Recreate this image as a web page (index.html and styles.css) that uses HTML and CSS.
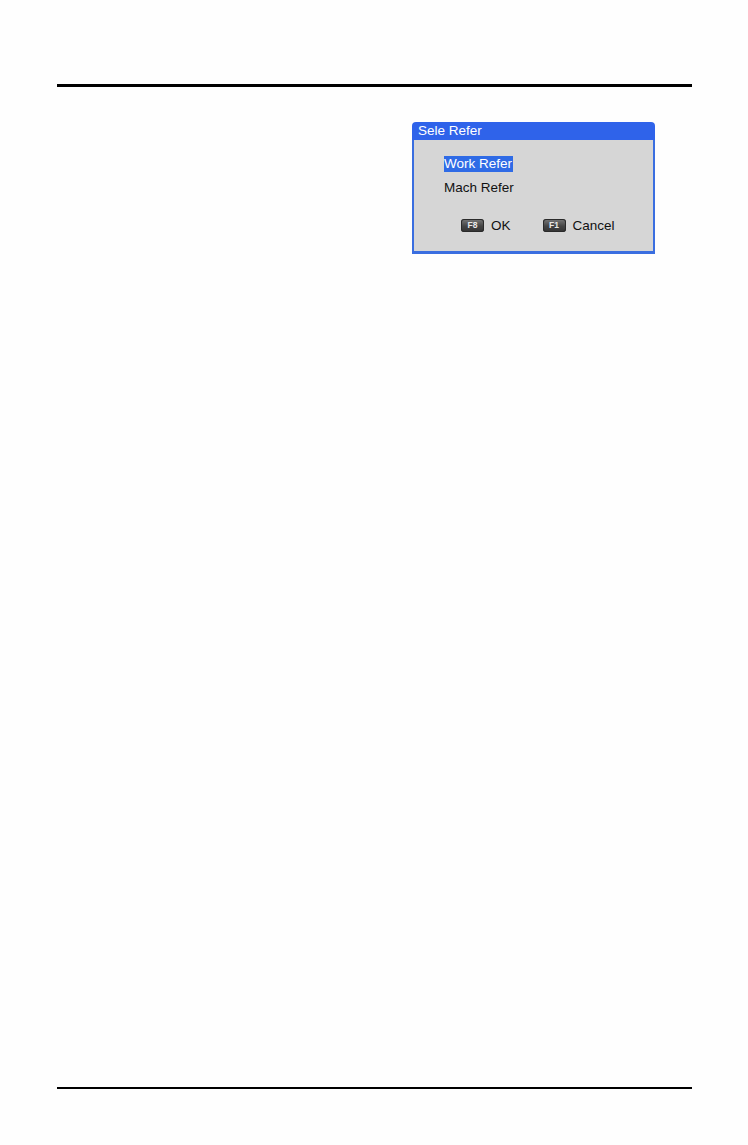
FILE: index.html
```html
<!DOCTYPE html>
<html>
<head>
<meta charset="utf-8">
<link rel="stylesheet" href="styles.css">
</head>
<body>
<div class="page">
  <div class="header-rule"></div>
  <div class="content">
    <div class="dialog">
      <div class="dialog-title">Sele Refer</div>
      <div class="dialog-body">
        <div class="options">
          <div class="option"><span class="selected">Work Refer</span></div>
          <div class="option">Mach Refer</div>
        </div>
        <div class="actions">
          <div class="action"><span class="key">F8</span><span class="action-label">OK</span></div>
          <div class="action"><span class="key">F1</span><span class="action-label">Cancel</span></div>
        </div>
      </div>
    </div>
  </div>
  <div class="footer-rule"></div>
</div>
</body>
</html>
```

FILE: styles.css
```css
html, body {
  margin: 0;
  padding: 0;
  background: #fefefe;
}

.page {
  width: 635px;
  height: 1145px;
  margin-left: 57px;
  display: flex;
  flex-direction: column;
  font-family: "Liberation Sans", Arial, sans-serif;
}

.header-rule {
  height: 84px;
  border-bottom: 3px solid #000;
  flex: none;
}

.content {
  flex: 1;
  padding-top: 35px;
  padding-left: 355px;
}

.footer-rule {
  flex: none;
  height: 56px;
  border-top: 2px solid #000;
  margin-top: auto;
}

.dialog {
  width: 243px;
}

.dialog-title {
  height: 18px;
  background: #2f63ea;
  border-radius: 4px 4px 0 0;
  color: #fff;
  font-size: 13.5px;
  line-height: 18px;
  padding-left: 6px;
}

.dialog-body {
  height: 111px;
  background: #d6d6d6;
  border-left: 2px solid #3a6ee0;
  border-right: 2px solid #3a6ee0;
  border-bottom: 3px solid #3a6ee0;
  padding-left: 30px;
  box-sizing: content-box;
  width: 209px;
}

.options {
  padding-top: 16px;
  font-size: 13.5px;
  color: #111;
}

.option {
  height: 24px;
  line-height: 16px;
}

.selected {
  display: inline-block;
  width: 69px;
  overflow: hidden;
  white-space: nowrap;
  vertical-align: top;
  background: #2f6be6;
  color: #fff;
}

.actions {
  display: flex;
  gap: 32px;
  padding-left: 17px;
  margin-top: 14px;
}

.action {
  display: flex;
  align-items: center;
  gap: 7px;
  font-size: 13.5px;
  color: #111;
}

.key {
  display: inline-block;
  width: 23px;
  height: 13px;
  line-height: 13px;
  border-radius: 3px;
  background: linear-gradient(#7a7a7a, #444 55%, #333);
  box-shadow: inset 0 0 0 1px #2a2a2a;
  color: #e8e8e8;
  font-size: 8.5px;
  font-weight: bold;
  text-align: center;
}
```
